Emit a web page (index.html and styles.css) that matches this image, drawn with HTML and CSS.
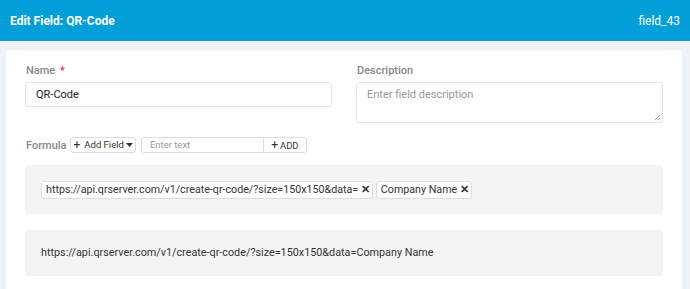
FILE: index.html
```html
<!DOCTYPE html>
<html>
<head lang="en">
    <meta charset="UTF-8">
    <title>Edit Field</title>
    <link rel="stylesheet" href="styles.css">
</head>
<body>
    <div class="header">
        <div class="title">Edit Field: QR-Code</div>
        <div class="field-id">field_43</div>
    </div>

    <div class="page">
        <div class="card">
            <div class="row">
                <div class="col">
                    <div class="label">Name <span class="req">*</span></div>
                    <div class="input">QR-Code</div>
                </div>
                <div class="col">
                    <div class="label">Description</div>
                    <div class="textarea">
                        <span class="placeholder">Enter field description</span>
                        <svg class="grip" width="7" height="7" viewBox="0 0 7 7">
                            <path d="M6 1L1 6M6 4L4 6" stroke="#aaa" stroke-width="1"/>
                        </svg>
                    </div>
                </div>
            </div>

            <div class="formula">
                <span class="flabel">Formula</span>
                <div class="btn">
                    <span class="plus">+</span>Add Field
                    <svg width="7" height="4" viewBox="0 0 7 4"><path d="M0 0h7L3.5 4z" fill="#333"/></svg>
                </div>
                <div class="group">
                    <div class="text-in">Enter text</div>
                    <div class="add-btn"><span class="plus">+</span>ADD</div>
                </div>
            </div>

            <div class="box chips">
                <div class="chip">https://api.qrserver.com/v1/create-qr-code/?size=150x150&amp;data= <span class="x">✕</span></div>
                <div class="chip">Company Name <span class="x">✕</span></div>
            </div>

            <div class="box preview">https://api.qrserver.com/v1/create-qr-code/?size=150x150&amp;data=Company Name</div>
        </div>
    </div>
</body>
</html>
```

FILE: styles.css
```css
*{
    box-sizing: border-box;
}
body{
    margin: 0;
    font-family: Roboto, "Liberation Sans", sans-serif;
    background-color: #eef1f5;
    color: #222;
}
.header{
    height: 41px;
    background-color: #029fd8;
    color: #fff;
    display: flex;
    justify-content: space-between;
    align-items: center;
    padding: 0 10px;
    font-size: 12px;
}
.title{
    font-weight: bold;
}
.page{
    padding: 9px 8px 0 6px;
}
.card{
    background-color: #fff;
    border-radius: 3px;
    padding: 14px 19px 20px 19px;
}
.row{
    display: flex;
    gap: 24px;
}
.col{
    flex: 1;
}
.label{
    font-size: 11px;
    color: #888;
    font-weight: 500;
    height: 13px;
    line-height: 13px;
    margin-bottom: 5px;
    padding-left: 1px;
}
.req{
    color: #e03030;
    margin-left: 2px;
}
.input{
    height: 25px;
    border: 1px solid #e3e3e8;
    border-radius: 3px;
    font-size: 11px;
    line-height: 23px;
    padding-left: 10px;
}
.textarea{
    position: relative;
    height: 41px;
    border: 1px solid #e3e3e8;
    border-radius: 3px;
    font-size: 11px;
    line-height: 24px;
    padding-left: 10px;
}
.placeholder{
    color: #999;
}
.grip{
    position: absolute;
    right: 1px;
    bottom: 1px;
}
.formula{
    display: flex;
    align-items: center;
    margin-top: 14px;
    height: 16px;
}
.flabel{
    font-size: 11px;
    color: #888;
    font-weight: 500;
    margin-left: 1px;
    margin-right: 3px;
}
.btn{
    height: 16px;
    border: 1px solid #dcdce2;
    border-radius: 3px;
    font-size: 9.5px;
    line-height: 14px;
    padding: 0 2px 0 3px;
    color: #333;
    display: flex;
    align-items: center;
    gap: 2px;
}
.plus{
    font-size: 12px;
    margin-right: 2px;
}
.group{
    display: flex;
    margin-left: 5px;
    height: 16px;
    border: 1px solid #dcdce2;
    border-radius: 3px;
    font-size: 9.5px;
    line-height: 14px;
}
.text-in{
    width: 121px;
    color: #999;
    padding-left: 8px;
}
.add-btn{
    width: 43px;
    border-left: 1px solid #dcdce2;
    color: #333;
    text-align: center;
}
.box{
    background-color: #f4f4f4;
    border-radius: 3px;
}
.chips{
    margin-top: 12px;
    height: 49px;
    display: flex;
    align-items: center;
    gap: 3px;
    padding-left: 16px;
}
.chip{
    height: 18px;
    background-color: #fff;
    border: 1px solid #dcdce2;
    border-radius: 3px;
    font-size: 10.7px;
    line-height: 16px;
    padding: 0 2px 0 4px;
    color: #333;
}
.x{
    font-size: 11px;
    font-weight: bold;
}
.preview{
    margin-top: 16px;
    height: 46px;
    font-size: 10.8px;
    line-height: 46px;
    padding-left: 16px;
    color: #333;
}
```
